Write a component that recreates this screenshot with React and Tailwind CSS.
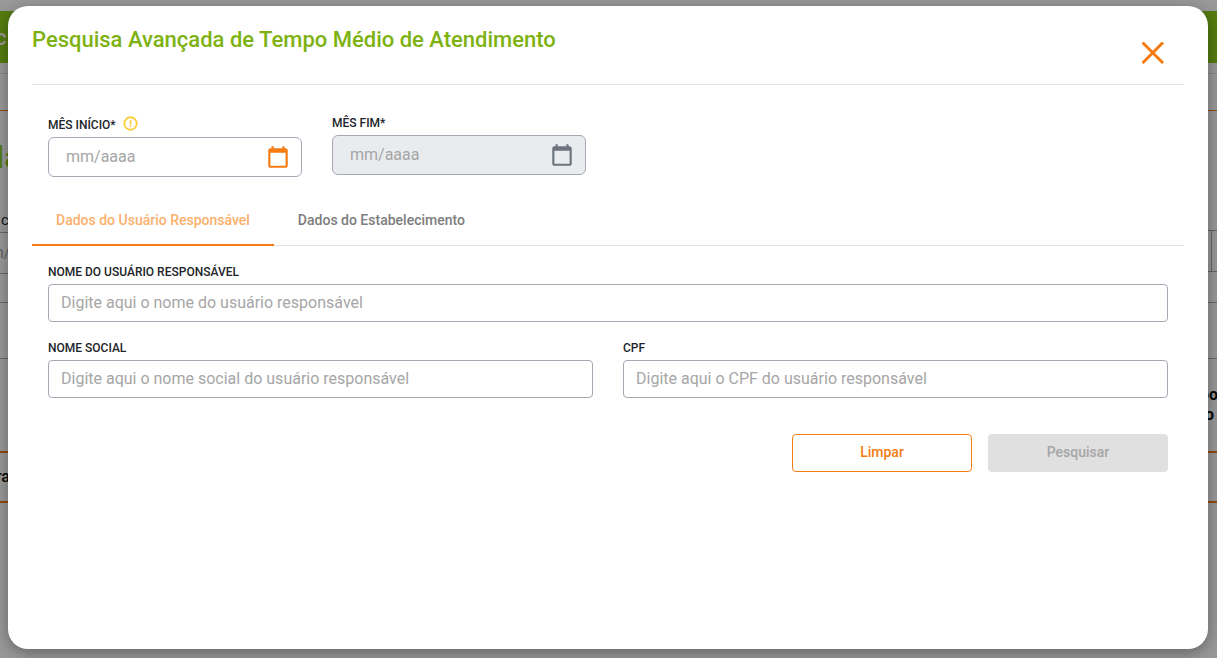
import React from "react";
import { CircleAlert } from "lucide-react";

function CalendarIcon({ className }) {
  return (
    <svg viewBox="0 0 24 24" fill="currentColor" className={className}>
      <path d="M19 4h-1V2h-2v2H8V2H6v2H5c-1.1 0-2 .9-2 2v14c0 1.1.9 2 2 2h14c1.1 0 2-.9 2-2V6c0-1.1-.9-2-2-2zm0 16H5V8h14v12z" />
    </svg>
  );
}

function Field({ label, placeholder, className = "" }) {
  return (
    <div className={className}>
      <label className="block h-[24px] text-[12px] leading-[24px] font-medium text-[#212529]">{label}</label>
      <input
        placeholder={placeholder}
        className="block h-[38px] w-full rounded-[4px] border border-[#aaa6b4] bg-white px-[12px] pb-[2px] text-[16px] text-[#212529] outline-none placeholder:text-[#a6a6a6]"
      />
    </div>
  );
}

function DateField({ disabled }) {
  return (
    <div
      className={`flex h-[40px] w-[254px] items-center rounded-[6px] border border-[#aaa6b4] pr-[10px] pl-[17px] ${
        disabled ? "bg-[#e9ecef] text-[#6c757d]" : "bg-white text-[#f47c12]"
      }`}
    >
      <input
        disabled={disabled}
        placeholder="mm/aaaa"
        className="h-full min-w-0 flex-1 bg-transparent pb-[2px] text-[16px] outline-none placeholder:text-[#a6a6a6]"
      />
      <CalendarIcon className="size-[26px] shrink-0" />
    </div>
  );
}

// what stays visible of the page behind the dialog
function BackgroundPage() {
  return (
    <div className="h-[658px] overflow-hidden bg-white font-['Roboto',sans-serif]">
      <div className="h-[11px]" />
      <div className="flex h-[52px] items-center bg-[#8ecf1a] text-[22px] font-medium text-white">
        <span className="-ml-[5px]">c</span>
      </div>
      <div className="h-[11px] border-b border-[#dddddd]" />
      <div className="h-[37px] border-b border-[#f47c12]" />
      <div className="h-[94px] pt-[26px] text-[32px] leading-[40px] font-medium text-[#8ecf1a]">
        <span className="-ml-[4px] block">la</span>
      </div>
      <div className="flex h-[69px]">
        <div className="flex-1">
          <div className="h-[28px] border-b border-[#aaa6b4] text-[15px] leading-[30px] text-[#212529]">
            <span className="ml-[1px] block">c</span>
          </div>
          <div className="h-[41px] border-b border-[#aaa6b4] text-[16px] leading-[40px] text-[#a6a6a6]">
            <span className="-ml-[5px] block">n/</span>
          </div>
        </div>
        <div className="mt-[25px] h-[42px] w-[9px] border-y border-[#aaa6b4] pl-[3px]">
          <div className="h-full border-l border-[#aaa6b4]" />
        </div>
      </div>
      <div className="h-[29px] border-b border-[#aaa6b4]" />
      <div className="h-[56px] border-b border-[#aaa6b4]" />
      <div className="flex h-[94px] justify-end border-b-2 border-[#f47c12] pt-[26px] text-[16px] leading-[20px] font-bold text-[#111111]">
        <div className="w-[17px]">
          <span className="block">po</span>
          <span className="block pl-[5px]">o</span>
        </div>
      </div>
      <div className="h-[50px] border-b-2 border-[#f47c12] text-[16px] leading-[48px] font-medium text-[#111111]">
        <span className="-ml-[4px] block">ra</span>
      </div>
    </div>
  );
}

export default function App() {
  return (
    <div className="relative h-[658px] w-[1217px] overflow-hidden font-['Roboto',sans-serif]">
      <BackgroundPage />
      <div className="absolute inset-0 bg-black/40" />
      <div className="absolute top-[6px] left-[8px] h-[643px] w-[1200px] rounded-[20px] bg-white px-[24px] shadow-[0_4px_16px_rgba(0,0,0,0.35)]">
        <div className="relative h-[79px] border-b border-[#e3e3e3] pt-[18px]">
          <h2 className="text-[22px] leading-[32px] font-medium text-[#7db212]">
            Pesquisa Avançada de Tempo Médio de Atendimento
          </h2>
          <button className="absolute top-[36px] right-[20px] text-[#f47c12]">
            <svg viewBox="0 0 22 22" className="block size-[22px]" stroke="currentColor" strokeWidth="3" strokeLinecap="square">
              <path d="M1.5 1.5l18.5 18.5M20 1.5l-18.5 18.5" />
            </svg>
          </button>
        </div>

        <div className="flex gap-[30px] px-[16px] pt-[26px]">
          <div>
            <div className="flex h-[26px] items-center gap-[7px] pt-[1px] text-[12px] font-medium text-[#212529]">
              <span>MÊS INÍCIO*</span>
              <CircleAlert className="-mt-[3px] size-[15px] text-[#fbcf3c]" strokeWidth={3} />
            </div>
            <DateField />
          </div>
          <div>
            <div className="flex h-[24px] items-center pb-[1px] text-[12px] font-medium text-[#212529]">MÊS FIM*</div>
            <DateField disabled />
          </div>
        </div>

        <div className="mt-[23px] flex h-[46px] border-b border-[#e3e3e3] text-[14px] font-medium">
          <div className="flex h-[46px] items-center border-b-2 border-[#f47c12] px-[24px] pb-[4px] text-[#fbb06c]">
            Dados do Usuário Responsável
          </div>
          <div className="flex h-[45px] items-center px-[24px] pb-[5px] text-[#7d7d7d]">Dados do Estabelecimento</div>
        </div>

        <div className="px-[16px] pt-[14px]">
          <Field label="NOME DO USUÁRIO RESPONSÁVEL" placeholder="Digite aqui o nome do usuário responsável" />
          <div className="mt-[14px] grid grid-cols-2 gap-[30px]">
            <Field label="NOME SOCIAL" placeholder="Digite aqui o nome social do usuário responsável" />
            <Field label="CPF" placeholder="Digite aqui o CPF do usuário responsável" />
          </div>
          <div className="mt-[36px] flex justify-end gap-[16px] text-[14px] font-medium">
            <button className="h-[38px] w-[180px] rounded-[4px] border border-[#f47c12] bg-white pb-[2px] text-[#f47c12]">Limpar</button>
            <button disabled className="h-[38px] w-[180px] rounded-[4px] bg-[#e0e0e0] pb-[2px] text-[#a6a6a6]">
              Pesquisar
            </button>
          </div>
        </div>
      </div>
    </div>
  );
}
